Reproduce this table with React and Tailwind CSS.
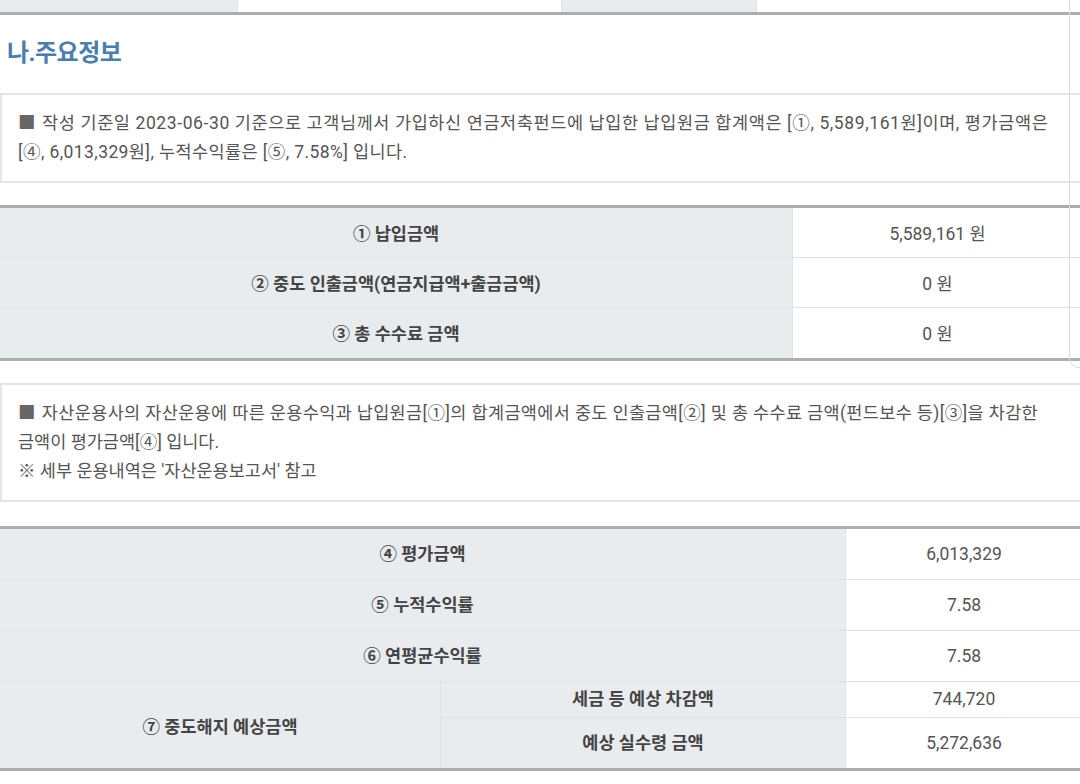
import React from 'react';

const font = { fontFamily: 'Roboto, "Noto Sans CJK KR", sans-serif' };

const LabelCell = ({ children, className = '' }) => (
    <div className={`flex items-center justify-center bg-[#e9ecee] text-[17.5px] font-bold text-[#444] ${className}`}>
        {children}
    </div>
);

const ValueCell = ({ children, className = '' }) => (
    <div className={`flex items-center justify-center bg-white text-[17.5px] text-[#555] ${className}`}>
        {children}
    </div>
);

const Square = () => <span className="mr-[6px] text-[#666]">■</span>;

const App = () => {
    const contribRows = [
        { label: '① 납입금액', value: '5,589,161 원' },
        { label: '② 중도 인출금액(연금지급액+출금금액)', value: '0 원' },
        { label: '③ 총 수수료 금액', value: '0 원' },
    ];

    const evalRows = [
        { label: '④ 평가금액', value: '6,013,329' },
        { label: '⑤ 누적수익률', value: '7.58' },
        { label: '⑥ 연평균수익률', value: '7.58' },
    ];

    return (
        <div className="relative w-full h-[784px] overflow-hidden bg-white" style={font}>
            <div className="w-[1082px]">
                {/* 위쪽 표 잘린 부분 */}
                <div className="flex h-[15px] border-b-[3px] border-[#a9afb1]">
                    <div className="w-[238px] bg-[#e9ecee] border-r border-[#dfe3e5]" />
                    <div className="w-[324px] bg-white border-r border-[#dfe3e5]" />
                    <div className="w-[195px] bg-[#e9ecee] border-r border-[#dfe3e5]" />
                    <div className="flex-1 bg-white" />
                </div>

                <h2 className="pt-[23px] pl-[7px] h-[78px] text-[24px] leading-[30px] font-bold tracking-[-0.5px] text-[#4a7db0]">
                    나.주요정보
                </h2>

                {/* 안내문 1 */}
                <div className="border-2 border-[#e3e6e8] px-[16px] py-[14px] text-[17.5px] leading-[29px] text-[#555] whitespace-nowrap">
                    <p className="tracking-[0.6px]">
                        <Square />
                        <span>작성 기준일 2023-06-30 기준으로 고객님께서 가입하신 연금저축펀드에 납입한 납입원금 합계액은 [①, 5,589,161원]이며, 평가금액은</span>
                    </p>
                    <p className="tracking-[0.4px]">[④, 6,013,329원], 누적수익률은 [⑤, 7.58%] 입니다.</p>
                </div>

                {/* 납입 표 */}
                <div className="mt-[22px] border-t-[3px] border-b-[3px] border-[#a9afb1]">
                    {contribRows.map((r, i) => (
                        <div key={r.label} className={`flex h-[50px] ${i < 2 ? 'border-b border-[#dde1e3]' : ''}`}>
                            <LabelCell className="w-[793px] border-r border-[#dfe3e5] pt-[3px]">{r.label}</LabelCell>
                            <ValueCell className="flex-1 pt-[3px]">{r.value}</ValueCell>
                        </div>
                    ))}
                </div>

                {/* 안내문 2 */}
                <div className="mt-[22px] border-2 border-[#e3e6e8] px-[16px] py-[14px] text-[17.5px] leading-[29px] text-[#555] whitespace-nowrap">
                    <p className="tracking-[0.35px]">
                        <Square />
                        <span>자산운용사의 자산운용에 따른 운용수익과 납입원금[①]의 합계금액에서 중도 인출금액[②] 및 총 수수료 금액(펀드보수 등)[③]을 차감한</span>
                    </p>
                    <p>금액이 평가금액[④] 입니다.</p>
                    <p>※ 세부 운용내역은 '자산운용보고서' 참고</p>
                </div>

                {/* 평가 표 */}
                <div className="mt-[24px] border-t-[3px] border-b-[3px] border-[#a9afb1]">
                    {evalRows.map((r) => (
                        <div key={r.label} className="flex h-[51px] border-b border-[#dde1e3]">
                            <LabelCell className="w-[846px] border-r border-[#dfe3e5]">{r.label}</LabelCell>
                            <ValueCell className="flex-1">{r.value}</ValueCell>
                        </div>
                    ))}
                    <div className="flex h-[86px]">
                        <LabelCell className="w-[441px] border-r border-[#dfe3e5] pt-[4px]">⑦ 중도해지 예상금액</LabelCell>
                        <div className="flex flex-1 flex-col">
                            <div className="flex h-[36px] border-b border-[#dde1e3]">
                                <LabelCell className="w-[405px] border-r border-[#dfe3e5]">세금 등 예상 차감액</LabelCell>
                                <ValueCell className="flex-1">744,720</ValueCell>
                            </div>
                            <div className="flex flex-1">
                                <LabelCell className="w-[405px] border-r border-[#dfe3e5]">예상 실수령 금액</LabelCell>
                                <ValueCell className="flex-1">5,272,636</ValueCell>
                            </div>
                        </div>
                    </div>
                </div>
            </div>

            {/* 스크롤바 트랙 */}
            <div className="absolute left-[1069px] top-[-10px] w-[40px] h-[378px] border border-[#d9dcde] rounded-bl-[10px]" />
        </div>
    );
};

export default App;
